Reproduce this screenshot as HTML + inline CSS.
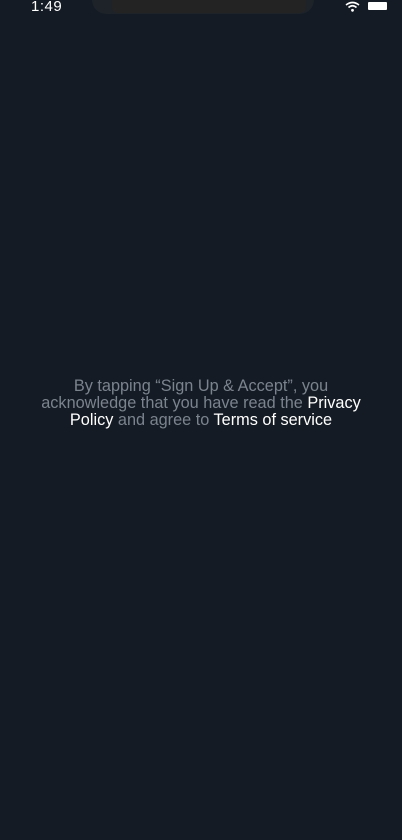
<!DOCTYPE html>
<html><head><meta charset="utf-8"><style>
html,body{margin:0;padding:0;width:402px;height:840px;background:#141b24;overflow:hidden;font-family:"Liberation Sans",sans-serif;}
.time{position:absolute;left:31px;top:0px;color:#fff;font-size:15px;line-height:14px;letter-spacing:0.5px}
.notch{position:absolute;left:92px;top:0;width:222px;height:14px;background:#1d2329;border-radius:0 0 14px 14px}
.notch2{position:absolute;left:112px;top:0;width:194px;height:13px;background:#232323;border-radius:0 0 6px 6px}
.bat{position:absolute;left:368px;top:2px;width:19px;height:8px;background:#fff;border-radius:1px}
.txt{position:absolute;left:0;width:402px;top:378px;text-align:center;color:#7b838e;font-size:16.3px;line-height:17px}
.w{color:#fff}
</style></head><body>
<div class="notch"></div><div class="notch2"></div>
<div class="time">1:49</div>
<svg style="position:absolute;left:345px;top:1px" width="15" height="11" viewBox="0 0 15 11">
<path d="M1 4 Q7.5 -1 14 4" stroke="#fff" stroke-width="1.6" fill="none"/>
<path d="M3.5 6.5 Q7.5 3 11.5 6.5" stroke="#fff" stroke-width="1.6" fill="none"/>
<circle cx="7.5" cy="9.3" r="1.4" fill="#fff"/></svg>
<div class="bat"></div>
<div class="txt">By tapping “Sign Up &amp; Accept”, you<br>acknowledge that you have read the <span class="w">Privacy</span><br><span class="w">Policy</span> and agree to <span class="w">Terms of service</span></div>
</body></html>
